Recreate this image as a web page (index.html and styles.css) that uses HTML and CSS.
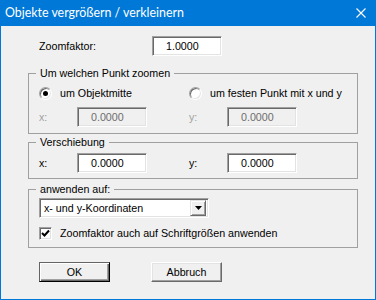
FILE: index.html
```html
<!DOCTYPE html>
<html>
<head>
	<title>Objekte vergrößern / verkleinern</title>
	<meta charset="utf-8">
	<link rel="stylesheet" href="styles.css">
</head>
<body>
<div class="window">
	<div class="titlebar">
		<span class="title">Objekte vergrößern / verkleinern</span>
		<svg class="close" width="10" height="10" viewBox="0 0 10 10"><path d="M0.5 0.5L9.5 9.5M9.5 0.5L0.5 9.5" stroke="#fff" stroke-width="1.1" fill="none"/></svg>
	</div>
	<div class="client">
		<div class="zoomrow">
			<span class="zoomlbl">Zoomfaktor:</span>
			<span class="edit wide">1.0000</span>
		</div>

		<fieldset class="group punkt">
			<legend>Um welchen Punkt zoomen</legend>
			<div class="cols">
				<div class="opt"><span class="radio on"></span>um Objektmitte</div>
				<div class="opt"><span class="radio"></span>um festen Punkt mit x und y</div>
				<div class="field off"><span class="lbl">x:</span><span class="edit">0.0000</span></div>
				<div class="field off"><span class="lbl">y:</span><span class="edit">0.0000</span></div>
			</div>
		</fieldset>

		<fieldset class="group shift">
			<legend>Verschiebung</legend>
			<div class="cols">
				<div class="field"><span class="lbl">x:</span><span class="edit">0.0000</span></div>
				<div class="field"><span class="lbl">y:</span><span class="edit">0.0000</span></div>
			</div>
		</fieldset>

		<fieldset class="group apply">
			<legend>anwenden auf:</legend>
			<div class="combo">
				<span class="combotext">x- und y-Koordinaten</span>
				<span class="combobtn"><svg width="7" height="4" viewBox="0 0 7 4"><path d="M0 0H7L3.5 4Z" fill="#000"/></svg></span>
			</div>
			<div class="opt check"><span class="box"><svg width="9" height="9" viewBox="0 0 9 9"><path d="M1 4L3.5 6.5L8 1.5" stroke="#000" stroke-width="2" fill="none"/></svg></span>Zoomfaktor auch auf Schriftgrößen anwenden</div>
		</fieldset>

		<div class="buttons">
			<span class="btn default">OK</span>
			<span class="btn">Abbruch</span>
		</div>
	</div>
</div>
</body>
</html>
```

FILE: styles.css
```css
body,div,fieldset,legend{margin:0;padding:0;}
body{background:#fff;font:10.7px/13px "Liberation Sans",Arial,sans-serif;color:#000;}
.window{width:376px;height:300px;box-sizing:border-box;border:1px solid #0078d7;border-top:0;background:#f0f0f0;}
.titlebar{height:26px;background:#0078d7;display:flex;align-items:center;justify-content:space-between;padding:0 9px 0 4px;color:#fff;}
.title{font:12.4px/26px Lato,"Noto Sans",sans-serif;}
.client{padding-left:27px;}
.zoomrow{display:flex;align-items:center;margin-top:10px;padding-left:11px;height:20px;}
.zoomlbl{width:113px;}
.edit{display:inline-block;box-sizing:border-box;width:70px;height:20px;line-height:18px;padding-left:13px;background:#fff;border:1px solid;border-color:#a0a0a0 #fff #fff #a0a0a0;box-shadow:inset 1px 1px 0 #696969,inset -1px -1px 0 #e3e3e3;}
.group{width:330px;box-sizing:border-box;border:1px solid #a0a0a0;min-width:0;}
.group legend{padding:0 4px;margin-left:-3px;line-height:13px;}
.punkt{margin-top:11px;padding:6px 10px 6px 10px;}
.shift{margin-top:2px;padding:4px 10px 5px 10px;}
.apply{margin-top:4px;padding:2px 10px 7px 10px;}
.cols{display:grid;grid-template-columns:150px 1fr;row-gap:7px;}
.opt{display:flex;align-items:center;height:14px;}
.radio{width:13px;height:13px;box-sizing:border-box;border-radius:50%;margin-right:8px;background:#fff;border:1px solid;border-color:#a0a0a0 #fff #fff #a0a0a0;box-shadow:inset 1px 1px 0 #696969,inset -1px -1px 0 #e3e3e3;position:relative;}
.radio.on::after{content:"";position:absolute;left:3px;top:3px;width:5px;height:5px;border-radius:50%;background:#000;}
.field{display:flex;align-items:center;height:20px;}
.field .lbl{width:38px;}
.off .lbl{color:#a0a0a0;}
.off .edit{background:#f0f0f0;color:#6d6d6d;}
.combo{display:flex;align-items:center;justify-content:space-between;width:170px;height:20px;box-sizing:border-box;background:#fff;border:1px solid;border-color:#a0a0a0 #fff #fff #a0a0a0;box-shadow:inset 1px 1px 0 #696969,inset -1px -1px 0 #e3e3e3;padding:2px 2px 2px 4px;}
.combobtn{display:flex;align-items:center;justify-content:center;width:16px;height:16px;box-sizing:border-box;background:#f0f0f0;border:1px solid;border-color:#e3e3e3 #696969 #696969 #e3e3e3;box-shadow:inset 1px 1px 0 #fff,inset -1px -1px 0 #a0a0a0;}
.check{margin-top:9px;height:13px;}
.box{display:flex;align-items:center;justify-content:center;width:13px;height:13px;box-sizing:border-box;margin-right:8px;background:#fff;border:1px solid;border-color:#a0a0a0 #fff #fff #a0a0a0;box-shadow:inset 1px 1px 0 #696969,inset -1px -1px 0 #e3e3e3;}
.buttons{display:flex;gap:41px;margin-top:14px;padding-left:11px;}
.btn{width:71px;height:20px;box-sizing:border-box;line-height:18px;text-align:center;background:#f0f0f0;border:1px solid;border-color:#fff #696969 #696969 #fff;box-shadow:inset -1px -1px 0 #a0a0a0,inset 1px 1px 0 #e3e3e3;}
.btn.default{border-color:#646464 #000 #000 #646464;box-shadow:inset 1px 1px 0 #fff,inset -1px -1px 0 #696969,inset -2px -2px 0 #a0a0a0;}
```
